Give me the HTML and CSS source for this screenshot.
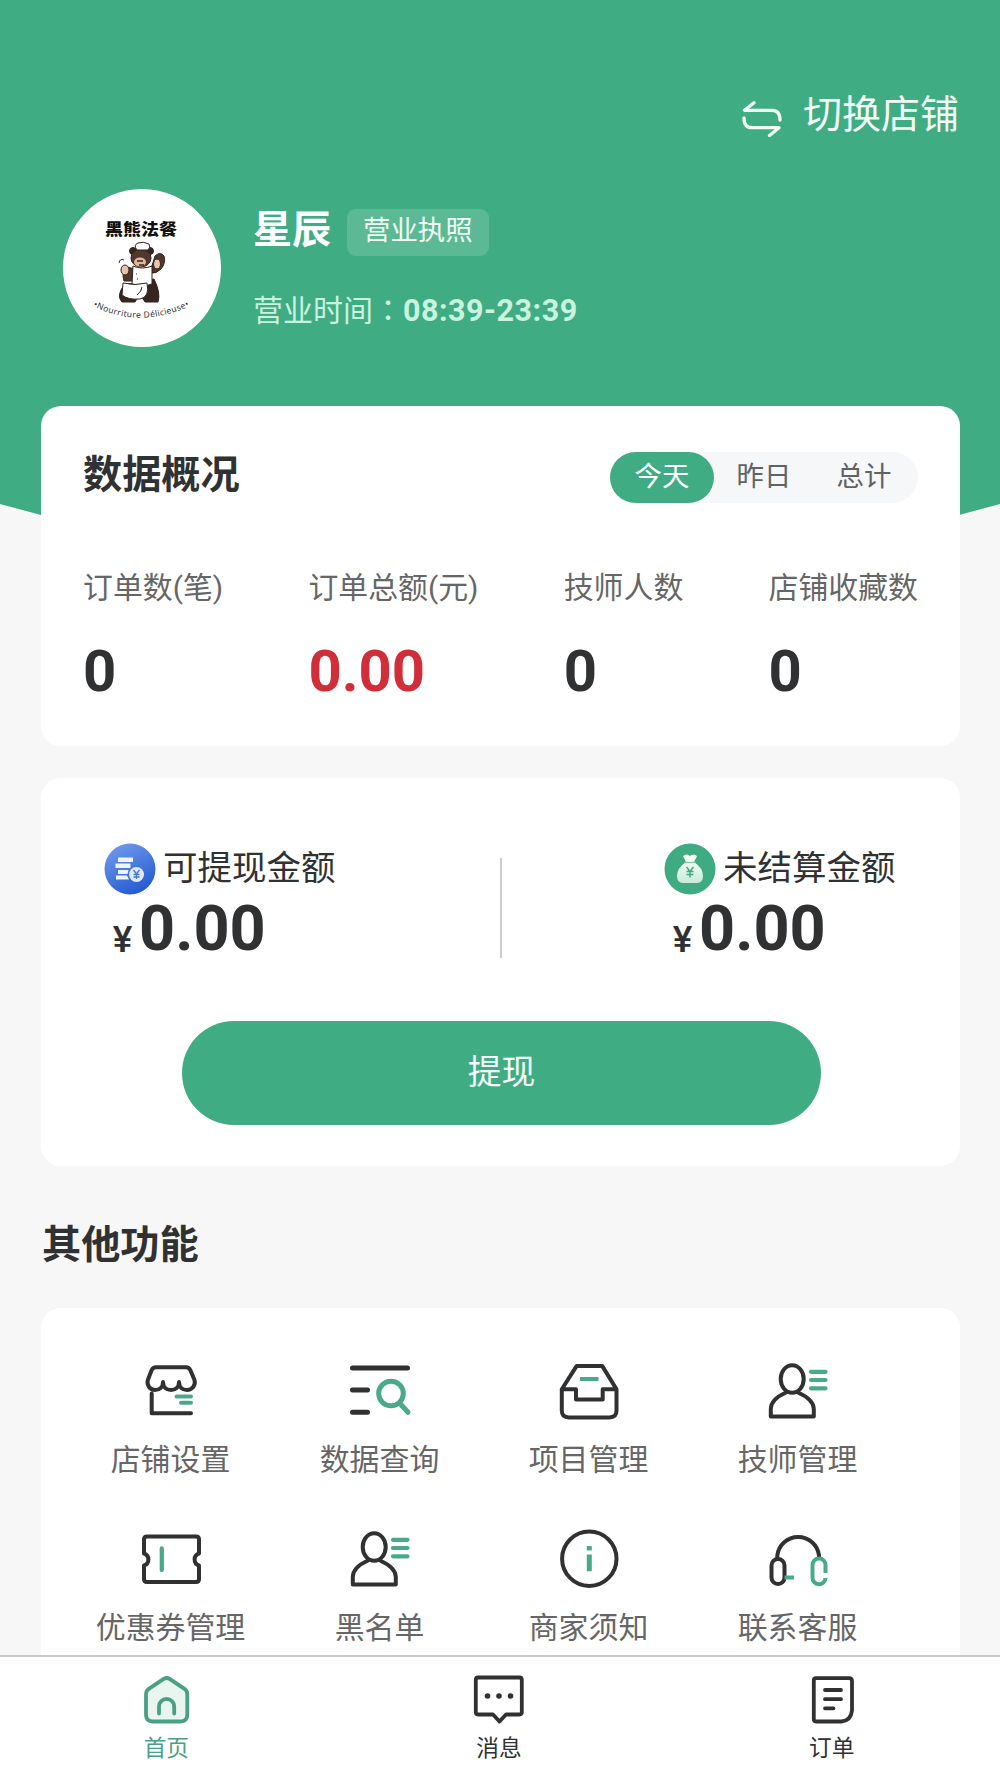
FILE: index.html
```html
<!DOCTYPE html>
<html lang="zh-CN">
<head>
<meta charset="utf-8">
<title>商家中心</title>
<link rel="stylesheet" href="styles.css">
</head>
<body>
<div class="app">
  <header class="hero">
    <div class="switch">
      <svg width="40" height="36" viewBox="0 0 40 36" fill="none" stroke="currentColor" stroke-width="3.300" stroke-linecap="round" stroke-linejoin="round"><path d="M12 1.800 2.500 9.300H30Q38 9.300 38 19"/><path d="M27.500 34.500 37 26.700H10Q2 26.700 2 17"/></svg>
      <span>切换店铺</span>
    </div>
    <div class="profile">
      <svg class="avatar" viewBox="0 0 158 158">
        <circle cx="79" cy="79" r="79" fill="#fff"/>
        <text class="logo-name" transform="translate(42 46) scale(1 .86)" textLength="72" lengthAdjust="spacingAndGlyphs">黑熊法餐</text>
        <g stroke="#33231d" stroke-width="1">
          <path d="M61 92q-3-10 3-14l8 2 3 12zM88 80l4-13q5-5 9 0 2 7-3 13-5 5-10 4z" fill="#51372d"/>
          <path d="M61 96q-8 11-2 17h13l5-8 5 8h13q3-9-4-23z" fill="#38251f"/>
          <path d="M70 77q9 4 19 0v18q-8 3-20 0z" fill="#fff"/>
          <path d="M60 94q12 3 24 0 3 14-7 16-12 1-18-4z" fill="#fff"/>
          <circle cx="70" cy="62" r="3.500" fill="#38251f"/><circle cx="87" cy="62" r="3.500" fill="#38251f"/>
          <ellipse cx="78" cy="69" rx="10" ry="9" fill="#51372d"/>
          <ellipse cx="77" cy="73" rx="6" ry="4.500" fill="#e2b698" stroke="none"/>
          <path d="M74 72h6M76 76h5" stroke-width="1.500"/>
          <path d="M74 61q-4-5 1-7 5-2 11 1 2 3-1 6z" fill="#fff"/>
          <ellipse cx="62" cy="81" rx="4" ry="5" fill="#e8c4aa"/><ellipse cx="94" cy="75" rx="3.500" ry="5" fill="#e8c4aa"/>
          <path d="M73 85h1M74 90h1M56 74q1-5 5-3M74 106q5-4 5-8" fill="none"/>
        </g>
        <path id="arc" d="M31 115Q78 138 127 114" fill="none"/>
        <text class="logo-sub" dy="2.500"><textPath href="#arc" textLength="98">•Nourriture Délicieuse•</textPath></text>
      </svg>
      <div class="info">
        <div class="name-row"><h1>星辰</h1><span class="badge">营业执照</span></div>
        <p class="hours">营业时间<span class="colon" lang="zh-TW">：</span><b>08:39-23:39</b></p>
      </div>
    </div>
  </header>

  <main>
    <section class="card overview">
      <div class="overview-head">
        <h2>数据概况</h2>
        <div class="tabs"><span class="tab active">今天</span><span class="tab">昨日</span><span class="tab">总计</span></div>
      </div>
      <div class="stats">
        <div class="stat"><p>订单数(笔)</p><b>0</b></div>
        <div class="stat"><p>订单总额(元)</p><b class="red">0.00</b></div>
        <div class="stat"><p>技师人数</p><b>0</b></div>
        <div class="stat"><p>店铺收藏数</p><b>0</b></div>
      </div>
    </section>

    <section class="card wallet">
      <div class="amounts">
        <div class="amount">
          <div class="amount-label">
            <svg width="52" height="52" viewBox="0 0 52 52"><defs><linearGradient id="blue" x1=".2" y1="0" x2=".7" y2="1"><stop stop-color="#6f9bec"/><stop offset="1" stop-color="#2458cf"/></linearGradient></defs><circle cx="26" cy="26" r="25.500" fill="url(#blue)"/><path d="M14 14.500h15v4.500H14zM11.500 20.500h15V25h-15zM14 27h10.500l-1 4H14zM12 32.500h11l2 4H12z" fill="#eef4ff"/><circle cx="32.500" cy="31.500" r="7.500" fill="#dfeaff"/><path d="M29.500 27l3 4 3-4M32.500 31v5M29.500 31.500h6M29.500 34h6" fill="none" stroke="#4775d8" stroke-width="1.300"/></svg>
            <span>可提现金额</span>
          </div>
          <div class="amount-value"><i>¥</i><b>0.00</b></div>
        </div>
        <div class="divider"></div>
        <div class="amount">
          <div class="amount-label">
            <svg width="52" height="52" viewBox="0 0 52 52"><defs><linearGradient id="bag" x1="0" y1="0" x2="0" y2="1"><stop stop-color="#fff"/><stop offset="1" stop-color="#c9eadb"/></linearGradient></defs><circle cx="26" cy="26" r="25.500" fill="#3fab83"/><path d="M19 13q4-3 7 0 3-3 7 0l-3 6q9 6 9 14 0 7-6 7H19q-6 0-6-7 0-8 9-14z" fill="url(#bag)"/><path d="M20.500 19.500h11" stroke="#79c9a7" stroke-width="1.200"/><path d="M22.500 24l3.500 4.500 3.500-4.500M26 28.500v6M22.500 28.500h7M22.500 31.500h7" fill="none" stroke="#3fab83" stroke-width="1.500"/></svg>
            <span>未结算金额</span>
          </div>
          <div class="amount-value"><i>¥</i><b>0.00</b></div>
        </div>
      </div>
      <button class="withdraw">提现</button>
    </section>

    <h2 class="section-title">其他功能</h2>
    <section class="card grid">
      <div class="item">
        <svg class="icon" viewBox="0 0 64 64"><path d="M17 7.200H47Q50 7.200 51.300 10L55.500 20C57 25.500 53 30 48 30 43 30 40 27 40 22 40 27 37 30 32 30 27 30 24 27 24 22 24 27 21 30 16 30 11 30 7.500 25.500 8.800 20L12.700 10Q14 7.200 17 7.200ZM12.700 33.500V53.300H52"/><path class="green" d="M37.500 36.500H52M42 42.700H52"/></svg>
        <span>店铺设置</span>
      </div>
      <div class="item">
        <svg class="icon" viewBox="0 0 64 64"><path stroke-width="5" d="M4.500 8H59.500M4.500 30H19.500M4.500 52.300H19.500"/><g class="green" stroke-width="5"><circle cx="43" cy="33.500" r="12.300"/><path d="M52 43.500 60 52.300"/></g></svg>
        <span>数据查询</span>
      </div>
      <div class="item">
        <svg class="icon" viewBox="0 0 64 64"><path d="M4.800 29.300 19.700 5.900H45.200L59.500 29.300V50.500Q59.500 57.400 52.500 57.400H11.800Q4.800 57.400 4.800 50.500ZM4.800 29.300H19V39.500H45.700V29.300H59.500"/><path class="green" stroke-linecap="butt" d="M23 19H41.500"/></svg>
        <span>项目管理</span>
      </div>
      <div class="item">
        <svg class="icon" viewBox="0 0 64 64"><path d="M20 32.500C10 37 4.800 43 4.800 49V56.500H47.800V49C47.800 43 42 37 32 32.500"/><ellipse cx="26.200" cy="19" rx="11.500" ry="13.700"/><path class="green" stroke-width="4.200" d="M45 11.800H59.500M45 20H59.500M45 28.300H59.500"/></svg>
        <span>技师管理</span>
      </div>
      <div class="item">
        <svg class="icon" viewBox="0 0 64 64"><path d="M8 8.500H57Q60 8.500 60 11.500V25.500A6.300 6.300 0 0 0 60 37.500V51Q60 54 57 54H8Q5 54 5 51V37.500A6.300 6.300 0 0 0 5 25.500V11.500Q5 8.500 8 8.500Z"/><path class="green" stroke-width="4.300" d="M22.800 20.500V42"/></svg>
        <span>优惠券管理</span>
      </div>
      <div class="item">
        <svg class="icon" viewBox="0 0 64 64"><path d="M20 32.500C10 37 4.800 43 4.800 49V56.500H47.800V49C47.800 43 42 37 32 32.500"/><ellipse cx="26.200" cy="19" rx="11.500" ry="13.700"/><path class="green" stroke-width="4.200" d="M45 11.800H59.500M45 20H59.500M45 28.300H59.500"/></svg>
        <span>黑名单</span>
      </div>
      <div class="item">
        <svg class="icon" viewBox="0 0 64 64"><circle cx="32.300" cy="30.700" r="27.200"/><path class="green" stroke-linecap="butt" stroke-width="5" d="M32.300 18V22.500M32.300 26.500V43.200"/></svg>
        <span>商家须知</span>
      </div>
      <div class="item">
        <svg class="icon" viewBox="0 0 64 64"><path d="M11.300 30V27.500A21 21 0 0 1 53 27.500V29"/><rect x="5.500" y="31" width="13" height="25" rx="6.500"/><g class="green" stroke-linecap="butt"><path d="M18.500 49.500H28"/><path d="M59.500 45V37A6.500 6.500 0 0 0 46.500 37V49.500A6.500 6.500 0 0 0 59.500 50"/></g></svg>
        <span>联系客服</span>
      </div>
    </section>
  </main>

  <nav class="tabbar">
    <div class="nav-item current">
      <svg class="nav-icon" viewBox="0 0 56 56"><path fill="#e9f6f0" d="M25.300 7.100Q28.700 5 32 7.100L46.500 16.800Q49.300 18.800 49.300 22.500V42.500Q49.300 49.500 42.500 49.500H14.800Q8 49.500 8 42.500V22.500Q8 18.800 10.800 16.800Z"/><path d="M21 41.500V34.500A7.600 7.600 0 0 1 36.200 34.500V41.500"/></svg>
      <span>首页</span>
    </div>
    <div class="nav-item">
      <svg class="nav-icon" viewBox="0 0 56 56"><path d="M7 5.500H48.500Q50.800 5.500 50.800 8V40Q50.800 42.500 48.500 42.500H35L28.500 49.500 22 42.500H7Q4.800 42.500 4.800 40V8Q4.800 5.500 7 5.500Z"/><g fill="currentColor" stroke="none"><circle cx="16.500" cy="24" r="2.800"/><circle cx="28" cy="24" r="2.800"/><circle cx="39.500" cy="24" r="2.800"/></g></svg>
      <span>消息</span>
    </div>
    <div class="nav-item">
      <svg class="nav-icon" viewBox="0 0 56 56"><path d="M12 6.200H45Q48 6.200 48 9V38.500Q47 48.500 37.500 49.500H12Q9.800 49.500 9.800 47V8.500Q9.800 6.200 12 6.200Z"/><path d="M21 18H37M21 27.200H37M21 36.300H29.500"/></svg>
      <span>订单</span>
    </div>
  </nav>
</div>
</body>
</html>
```
FILE: styles.css
```css
* { box-sizing: border-box; margin: 0; padding: 0; }
body { background: #f7f7f7; color: #303133; font-family: Roboto, "Noto Sans CJK SC", sans-serif; }
.app { display: flex; flex-direction: column; width: 1000px; height: 1778px; overflow: hidden; }

.hero { height: 516px; flex: none; padding-top: 90px; background: #40ac84; color: #fff; clip-path: polygon(0 0, 100% 0, 100% 504px, 95.9% 515px, 4.1% 515px, 0 504px); }
.switch { display: flex; justify-content: flex-end; align-items: center; gap: 21px; height: 50px; padding: 0 41px 0 0; font-size: 39px; line-height: 50px; color: #f2fbf5; }
.switch svg { margin-top: 8px; }
.profile { display: flex; gap: 32px; margin-top: 49px; padding-left: 63px; }
.avatar { width: 158px; height: 158px; }
.logo-name { font: 900 18px "Noto Sans CJK SC", sans-serif; fill: #111; }
.logo-sub { font: 8.5px "Open Sans", sans-serif; fill: #222; }
.info { padding-top: 20px; }
.name-row { display: flex; gap: 16px; height: 47px; }
.name-row h1 { font-size: 39px; line-height: 43px; }
.badge { height: 47px; padding: 0 16px; border-radius: 9px; background: #5bba95; color: #effcf4; font-size: 27.4px; line-height: 45px; }
.hours { margin-top: 35px; font-size: 30px; line-height: 40px; color: #c9f3de; }
.hours .colon { font-family: "Noto Sans CJK TC", sans-serif; line-height: 1; }
.hours b { font-size: 30.5px; letter-spacing: .5px; }

main { flex: 1; min-height: 0; overflow: hidden; margin-top: -110px; padding: 0 40px 0 41px; position: relative; }
.card { background: #fff; border-radius: 20px; }
.overview { height: 340px; padding: 46px 42px 0; }
.overview-head { display: flex; justify-content: space-between; }
h2 { font-size: 39.2px; line-height: 46px; }
.tabs { display: flex; height: 51px; padding-right: 4px; border-radius: 26px; background: #f5f7f8; font-size: 27.4px; line-height: 50px; color: #606266; }
.tab { width: 100px; text-align: center; }
.tab.active { width: 104px; border-radius: 26px; background: #40ac84; color: #fff; }
.stats { display: flex; justify-content: space-between; margin-top: 65px; }
.stat p { font-size: 29.9px; line-height: 40px; color: #666; }
.stat b { display: block; margin-top: 31px; font-size: 58px; line-height: 64px; }
.stat .red { color: #d02f3a; }

.wallet { height: 388px; margin-top: 32px; padding: 65px 63px 0; }
.amounts { display: flex; justify-content: space-between; height: 115px; }
.amount { width: 233px; }
.amount-label { display: flex; gap: 7px; height: 52px; font-size: 34.5px; line-height: 50px; white-space: nowrap; }
.amount-value { display: flex; align-items: baseline; padding: 2px 0 0 4px; line-height: 64px; }
.amount-value i { width: 31px; font: 500 37px/40px Roboto, sans-serif; position: relative; top: 2px; left: -1px; text-align: center; }
.amount-value b { font-size: 63px; }
.divider { width: 2px; height: 100px; margin: 15px 0 0; background: #ccc; }
.withdraw { display: block; width: 639px; height: 104px; margin: 63px 0 0 78px; border: 0; border-radius: 52px; background: #40ac84; color: #f4fff9; font: 33.800px/102px Roboto, "Noto Sans CJK SC", sans-serif; }

.section-title { padding: 54px 0 0 1px; line-height: 50px; }
.grid { display: grid; grid-template-columns: repeat(4, 209px); grid-auto-rows: 167.500px; height: 500px; margin-top: 38px; padding: 52px 0 0 25px; }
.item { display: flex; flex-direction: column; align-items: center; gap: 16px; font-size: 29.9px; line-height: 40px; color: #666; }
.icon { width: 64px; height: 64px; fill: none; stroke: #303133; stroke-width: 4; stroke-linecap: round; stroke-linejoin: round; }
.icon .green { stroke: #4aa98a; }

.tabbar { display: flex; flex: none; height: 123px; border-top: 2px solid #c9c9c9; padding-right: 2px; background: #fff; position: relative; }
.nav-item { display: flex; flex: 1; flex-direction: column; align-items: center; padding-top: 15px; gap: 6px; font-size: 22.700px; line-height: 30px; }
.nav-item.current { color: #4aa085; }
.nav-icon { width: 56px; height: 56px; fill: none; stroke: currentColor; stroke-width: 3.800; stroke-linecap: round; stroke-linejoin: round; }
```
